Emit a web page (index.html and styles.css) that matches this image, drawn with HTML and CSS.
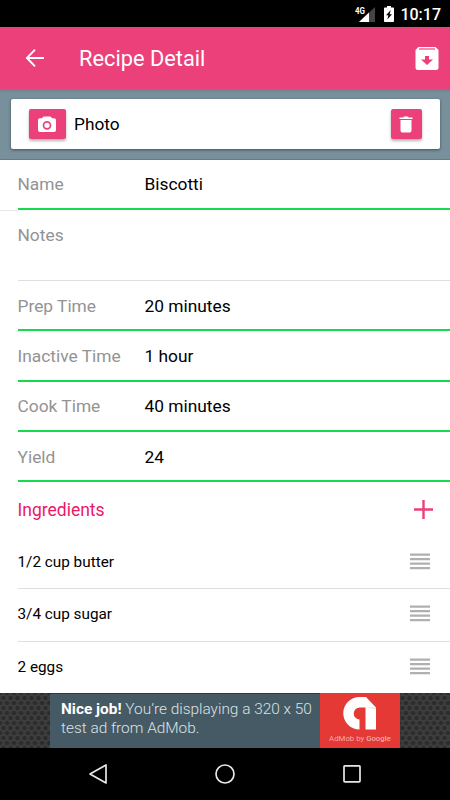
FILE: index.html
```html
<!DOCTYPE html>
<html lang="en">
<head>
<meta charset="utf-8">
<title>Recipe Detail</title>
<link rel="stylesheet" href="styles.css">
</head>
<body>
<div class="screen">
  <div class="status">
    <svg class="signal" width="22" height="18" viewBox="0 0 22 18">
      <path d="M21 2v15H5z" fill="#444"/><path d="M15 7.600V17H5z" fill="#fff"/>
      <text class="network" x="1" y="8.500" textLength="10" lengthAdjust="spacingAndGlyphs">4G</text>
    </svg>
    <svg class="battery" width="10" height="16" viewBox="0 0 10 16"><path d="M3 0h4v1.500h2.200q.8 0 .8.800V15.200q0 .8-.8.800H.8Q0 16 0 15.200V2.300q0-.8.800-.8H3z" fill="#fff"/><path d="M6.800 4L2 9.200h2.400L3.300 13.500 8 8.200H5.600z" fill="#000"/></svg>
    <span class="clock">10:17</span>
  </div>
  <header class="toolbar">
    <svg class="back" width="20" height="20" viewBox="0 0 20 20" fill="none" stroke="#fff" stroke-width="1.900"><path d="M10 1.700L1.900 10l8.100 8.300M2 10h17"/></svg>
    <h1>Recipe Detail</h1>
    <svg class="archive" width="24" height="25" viewBox="0 0 24 25"><path d="M3.400 1h17.200L23.500 4v18q0 2-2.500 2H3Q.5 24 .5 22V4z" fill="#fff"/><path d="M4 3h16" stroke="#ec407a" stroke-width="1.200"/><path d="M10 10h4v3.500h4L12 19l-6-5.500h4z" fill="#ec407a"/></svg>
  </header>
  <section class="photo-band">
    <div class="photo-card">
      <button class="btn camera"><svg width="20" height="17" viewBox="0 0 20 17"><path d="M6.500.5h7l1.600 1.700H17q2 0 2 1.800V14q0 2-2 2H3q-2 0-2-2V4Q1 2.200 3 2.200h1.900z" fill="#fff"/><circle cx="10" cy="9.300" r="3.500" fill="none" stroke="#ec407a" stroke-width="1.700"/></svg></button>
      <span class="photo-label">Photo</span>
      <button class="btn trash"><svg width="14" height="17" viewBox="0 0 14 17"><path d="M.5 1.500h3.800L5.100.5h3.800l.8 1h3.800v1.500H.5zM1.500 4h11v10.500q0 2-1.800 2H3.300q-1.800 0-1.800-2z" fill="#fff"/></svg></button>
    </div>
  </section>
  <main>
    <div class="field name"><label>Name</label><span>Biscotti</span></div>
    <div class="field notes"><label>Notes</label></div>
    <div class="field"><label>Prep Time</label><span>20 minutes</span></div>
    <div class="field"><label>Inactive Time</label><span>1 hour</span></div>
    <div class="field"><label>Cook Time</label><span>40 minutes</span></div>
    <div class="field"><label>Yield</label><span>24</span></div>
    <div class="heading"><h2>Ingredients</h2><svg width="20" height="20" viewBox="0 0 20 20"><path d="M9.500 0v19M0 9.500h19" stroke="#ec407a" stroke-width="2.400"/></svg></div>
    <div class="item"><span>1/2 cup butter</span><svg class="grip" width="20" height="18" viewBox="0 0 20 18"><path d="M0 1.700h20M0 6.200h20M0 10.700h20M0 15.200h20"/></svg></div>
    <div class="item"><span>3/4 cup sugar</span><svg class="grip" width="20" height="18" viewBox="0 0 20 18"><path d="M0 1.700h20M0 6.200h20M0 10.700h20M0 15.200h20"/></svg></div>
    <div class="item"><span>2 eggs</span><svg class="grip" width="20" height="18" viewBox="0 0 20 18"><path d="M0 1.700h20M0 6.200h20M0 10.700h20M0 15.200h20"/></svg></div>
  </main>
  <aside class="ad">
    <div class="ad-text"><b>Nice job!</b> You’re displaying a 320 x 50<br>test ad from AdMob.</div>
    <div class="ad-logo">
      <svg width="36" height="33" viewBox="0 0 36 33"><path d="M17.500 0H24L34 10.500v22H23.500V10.500H18a6 6 0 0 0-.5 12V32.500A16.200 16.200 0 0 1 17.500 0z" fill="#fff"/><path d="M23.500 10.500H34v1.500z" fill="#dedede"/></svg>
      <span>AdMob by <b>Google</b></span>
    </div>
  </aside>
  <nav class="navbar">
    <svg width="20" height="22" viewBox="0 0 20 22" fill="none" stroke="#e8e8e8" stroke-width="1.700"><path d="M18 2v18L2 11z" stroke-linejoin="round"/></svg>
    <svg width="20" height="22" viewBox="0 0 20 22" fill="none" stroke="#e8e8e8" stroke-width="1.700"><circle cx="10" cy="11" r="9"/></svg>
    <svg width="20" height="22" viewBox="0 0 20 22" fill="none" stroke="#e8e8e8" stroke-width="1.700"><rect x="2" y="2.800" width="16" height="16" rx=".8"/></svg>
  </nav>
</div>
</body>
</html>
```
FILE: styles.css
```css
* { box-sizing: border-box; }
body { margin: 0; font-family: Roboto, sans-serif; background: #fff; color: #000; }
h1, h2 { margin: 0; font-weight: 400; }
svg { display: block; flex: none; }
.screen { width: 450px; height: 800px; overflow: hidden; display: flex; flex-direction: column; }
.status { flex: none; height: 27px; background: #000; display: flex; align-items: center; padding: 1px 9px 0 0; justify-content: flex-end; color: #fff; }
.signal { margin: 0 8px 0 0; }
.network { font: 700 8.500px Roboto, sans-serif; fill: #fff; }
.clock { font-size: 16px; font-weight: 500; margin: 1px 0 0 6px; line-height: 20px; }
.toolbar { flex: none; height: 62px; background: #ec407a; display: flex; align-items: center; padding: 0 11px 0 25px; color: #fff; }
.toolbar h1 { font-size: 21.800px; margin-left: 34px; flex: 1; line-height: 30px; padding-top: 1px; }
.photo-band { flex: none; height: 71px; background: linear-gradient(#6c838f, #78909c 4px); border-bottom: 1px solid #607d8b; padding: 10px 10px 0 11px; }
.photo-card { height: 50px; background: #fff; border-radius: 2px; box-shadow: 0 1px 3px rgba(0,0,0,.45); display: flex; align-items: center; padding: 0 18px 0 17.500px; }
.btn { border: 0; padding: 0; height: 30px; border-radius: 2px; background: #ec407a; box-shadow: 0 2px 3px rgba(0,0,0,.3); display: flex; align-items: center; justify-content: center; }
.camera { width: 37px; }
.trash { width: 31.500px; }
.photo-label { font-size: 17.300px; margin-left: 8.500px; flex: 1; }
main { flex: none; height: 533px; }
.field { height: 50.300px; margin-left: 17.500px; border-bottom: 2px solid #18d850; display: flex; font-size: 17.350px; line-height: 20px; padding-top: 14.700px; }
.field label { width: 127px; color: #939393; }
.name { height: 50px; position: relative; padding-top: 14px; }
.name::after { content: ""; position: absolute; left: -17.500px; top: 50px; width: 18px; height: 1px; background: #e6e6e6; }
.notes { height: 71px; border-bottom: 1px solid #dedede; padding-top: 15px; }
.heading { height: 54.800px; display: flex; justify-content: space-between; align-items: center; padding: 1px 16px 0 17.500px; color: #ec1867; }
.heading h2 { font-size: 17.500px; }
.item { height: 52.500px; margin-left: 17.500px; padding-right: 20px; border-bottom: 1px solid #dedede; display: flex; align-items: center; justify-content: space-between; font-size: 15.300px; padding-bottom: 2px; }
.item:last-child { border: 0; }
.grip { stroke: #b0b0b0; stroke-width: 2.200; }
.ad { flex: none; height: 55px; display: flex; justify-content: center; background-color: #3d3d3d; background-image: radial-gradient(circle, #2c2c2c 1.800px, transparent 2.500px), radial-gradient(circle, #2c2c2c 1.800px, transparent 2.500px); background-size: 7px 10px; background-position: 0 0, 3.500px 5px; }
.ad-text { width: 270px; background: #455a64; border-top: 1px solid #193c50; padding: 6px 0 0 11px; color: #dce2e5; font-size: 15.400px; line-height: 18.500px; font-weight: 300; white-space: nowrap; }
.ad-text b { color: #fff; font-weight: 700; }
.ad-logo { width: 80px; background: #e53935; display: flex; flex-direction: column; align-items: center; padding-top: 4px; color: #f4aaa7; font-size: 7.800px; white-space: nowrap; }
.ad-logo span { margin-top: 4px; line-height: 10px; }
.ad-logo b { font-weight: 500; }
.navbar { flex: 1; background: #000; display: flex; align-items: center; justify-content: center; gap: 107px; }
```
